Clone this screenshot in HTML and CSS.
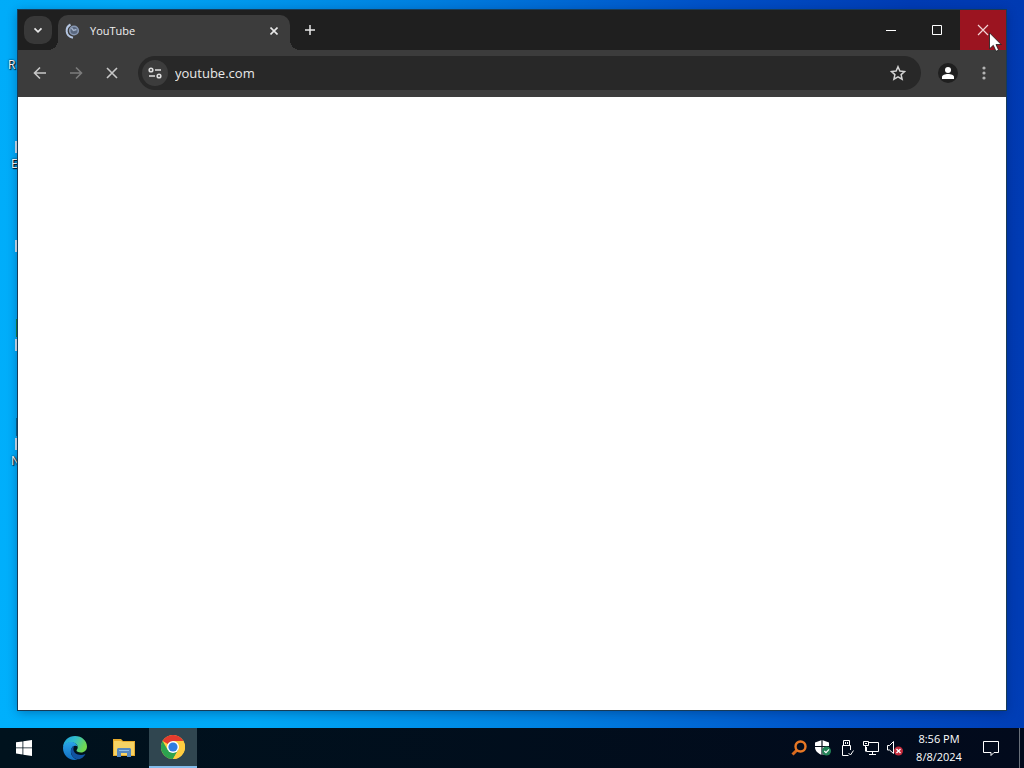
FILE: index.html
```html
<!DOCTYPE html>
<html lang="en">

<head>
  <meta charset="utf-8">
  <meta name="viewport" content="width=device-width">
  <title>YouTube</title>
  <link rel="stylesheet" href="styles.css">
</head>

<body>
  <main class="desktop">
    <!-- shortcuts, mostly hidden behind the window -->
    <ul class="shortcuts">
      <li><span class="label">R</span></li>
      <li><i class="arrow"></i><span class="label">E</span></li>
      <li><i class="arrow"></i></li>
      <li><i class="edge green"></i><i class="arrow"></i></li>
      <li><i class="edge"></i><i class="arrow"></i><span class="label">N</span></li>
    </ul>

    <section class="window">
      <header class="titlebar">
        <button class="tab-search" aria-label="Search tabs">
          <svg width="10" height="10" viewBox="0 0 10 10"><path d="M1.500 3.300L5 6.800l3.500-3.500" fill="none" stroke="#e8e8e8" stroke-width="1.700"/></svg>
        </button>
        <div class="tab">
          <svg width="16" height="16" viewBox="0 0 16 16" fill="none">
            <path d="M5.500 1.500C0 4.500 0 13 8 14.800" stroke="#b5c6e2" stroke-width="2"/>
            <circle cx="9" cy="7.500" r="4.300" fill="#59677e" stroke="#8797b2" stroke-width="1.600"/>
            <path d="M6.500 5l2 2.500 3-1" stroke="#a5b3ca" stroke-width="1.400"/>
          </svg>
          <span class="tab-title">YouTube</span>
          <button class="tab-close" aria-label="Close tab">
            <svg width="8" height="8" viewBox="0 0 8 8"><path d="M0.500 0.500l7 7M7.500 0.500l-7 7" stroke="#e8e8e8" stroke-width="1.600"/></svg>
          </button>
        </div>
        <button class="new-tab" aria-label="New tab">
          <svg width="10" height="10" viewBox="0 0 10 10"><path d="M5 0v10M0 5h10" stroke="#e8e8e8" stroke-width="1.500"/></svg>
        </button>
        <div class="controls">
          <button aria-label="Minimize"><svg width="10" height="10" viewBox="0 0 10 10"><path d="M0 5.500h10" stroke="#fff"/></svg></button>
          <button aria-label="Maximize"><svg width="10" height="10" viewBox="0 0 10 10"><path d="M.5.5h9v9h-9z" fill="none" stroke="#fff"/></svg></button>
          <button class="close" aria-label="Close"><svg width="12" height="12" viewBox="0 0 12 12"><path d="M1 1l10 10M11 1L1 11" stroke="#f3d3d5" stroke-width="1.200"/></svg></button>
        </div>
      </header>

      <nav class="toolbar">
        <button class="nav-button" aria-label="Back">
          <svg width="16" height="16" viewBox="0 0 16 16"><path d="M14 8H3M8 2.500L2.500 8 8 13.500" fill="none" stroke="#c8c8c8" stroke-width="1.600"/></svg>
        </button>
        <button class="nav-button" aria-label="Forward" disabled>
          <svg width="16" height="16" viewBox="0 0 16 16"><path d="M2 8h11M8 2.500L13.500 8 8 13.500" fill="none" stroke="#7c7c7c" stroke-width="1.600"/></svg>
        </button>
        <button class="nav-button" aria-label="Stop loading">
          <svg width="16" height="16" viewBox="0 0 16 16"><path d="M3 3l10 10M13 3L3 13" stroke="#c8c8c8" stroke-width="1.600"/></svg>
        </button>
        <div class="omnibox">
          <button class="site-info" aria-label="View site information">
            <svg width="14" height="12" viewBox="0 0 14 12" fill="none" stroke="#dedede" stroke-width="1.600">
              <circle cx="3" cy="3" r="1.800"/><path d="M7 3h6M1 9h6"/><circle cx="11" cy="9" r="1.800"/>
            </svg>
          </button>
          <input class="address" type="text" value="youtube.com" aria-label="Address">
          <button class="bookmark" aria-label="Bookmark this tab">
            <svg width="16" height="16" viewBox="0 0 16 16"><path d="M8 1.700l1.900 4.300 4.700.5-3.500 3.100 1 4.600L8 11.800l-4.100 2.400 1-4.600L1.400 6.500l4.700-.5z" fill="none" stroke="#d4d4d4" stroke-width="1.500"/></svg>
          </button>
        </div>
        <button class="profile" aria-label="You">
          <svg width="14" height="14" viewBox="0 0 14 14" fill="#fff"><circle cx="7" cy="4" r="3"/><path d="M1 13v-2c0-2 3-3 6-3s6 1 6 3v2z"/></svg>
        </button>
        <button class="nav-button" aria-label="Menu">
          <svg width="4" height="14" viewBox="0 0 4 14" fill="#b4b4b4"><circle cx="2" cy="2" r="1.600"/><circle cx="2" cy="7" r="1.600"/><circle cx="2" cy="12" r="1.600"/></svg>
        </button>
      </nav>

      <div class="page"></div>

      <svg class="cursor" width="13" height="20" viewBox="0 0 13 20"><path d="M.5.8v16l3.800-3.500 2.700 6 2.600-1.200-2.600-5.600h5.200z" fill="#fff" stroke="#1b1b1b" stroke-width=".8"/></svg>
    </section>
  </main>

  <footer class="taskbar">
    <button class="task" aria-label="Start">
      <svg width="16" height="16" viewBox="0 0 16 16" fill="#fff"><path d="M0 2.300l6.500-.9v6.100H0zM7.300 1.300L16 0v7.500H7.300zM0 8.300h6.500v6.200L0 13.600zM7.300 8.300H16V16l-8.700-1.300z"/></svg>
    </button>
    <button class="task" aria-label="Microsoft Edge">
      <svg width="24" height="24" viewBox="0 0 24 24">
        <defs>
          <linearGradient id="edge-top" x1="0" y1="0" x2="1" y2=".4"><stop offset="0" stop-color="#1b9de0"/><stop offset=".5" stop-color="#31bdca"/><stop offset="1" stop-color="#70d84f"/></linearGradient>
          <linearGradient id="edge-left" x1="0" y1="0" x2="0" y2="1"><stop offset="0" stop-color="#29a4e8"/><stop offset="1" stop-color="#126dc0"/></linearGradient>
        </defs>
        <path d="M0 11C.5 4.500 5.500 0 12 0c7 0 12 5 12 10.500 0 3.500-2.500 6-6 6-3 0-4.500-1.200-4.500-2 0-.8 1.200-1.200 1.200-3.200C14.700 8.500 12 6.500 8.500 6.500 4.500 6.500 1.500 8.500 0 11z" fill="url(#edge-top)"/>
        <path d="M0 12c0-3.500 4-6 8-6 3.500 0 6 2 6.500 4.500C13.500 9.500 9 9 8 14c-.8 4.500 2 8.500 6.500 9.600C7 25.500 0 20 0 12z" fill="url(#edge-left)"/>
        <path d="M11.500 9.500C8.500 11 7.500 13.500 8 16.500c.8 4 4 6.800 7.200 6.800 3 0 6-2.600 7.200-5.300-6 2.600-12.500-.5-12-5.500.1-1.200.6-2.200 1.100-3z" fill="#1152a0"/>
      </svg>
    </button>
    <button class="task" aria-label="File Explorer">
      <svg width="22" height="20" viewBox="0 0 22 20">
        <path d="M0 2V1h8l2 2h12v15H0z" fill="#e8ac2d"/>
        <path d="M1 3h7l2 1h11v13H1z" fill="#f6d365"/>
        <path d="M4 19v-8l1-1h12l1 1v8h-4v-4H8v4z" fill="#5688bf"/>
        <path d="M6 12h10v1H6z" fill="#8fbfe9"/>
      </svg>
    </button>
    <button class="task active" aria-label="Google Chrome">
      <svg width="24" height="24" viewBox="0 0 24 24">
        <circle cx="12" cy="12" r="12" fill="#ffcd40"/>
        <path d="M12 12L1.600 6A12 12 0 0 1 22.400 6H12z" fill="#e33b2e"/>
        <path d="M1.600 6A12 12 0 0 0 12 24l5.200-9L12 12 6.800 15z" fill="#2da34f"/>
        <path d="M22.400 6A12 12 0 0 1 12 24l5.200-9A6 6 0 0 0 12 6z" fill="#ffcd40"/>
        <circle cx="12" cy="12" r="6" fill="#fff"/>
        <circle cx="12" cy="12" r="4.600" fill="#2f7de1"/>
      </svg>
    </button>

    <div class="tray">
      <button aria-label="Search tool">
        <svg width="16" height="16" viewBox="0 0 16 16" fill="none"><path d="M6 10l-4.500 4.500" stroke="#d8691e" stroke-width="3"/><circle cx="9.500" cy="6.500" r="5" stroke="#e87825" stroke-width="2.400"/></svg>
      </button>
      <button aria-label="Windows Security">
        <svg width="16" height="16" viewBox="0 0 16 16"><path d="M7 0l7 2.500V7c0 4-3 6.500-7 8-4-1.500-7-4-7-8V2.500z" fill="#fff"/><path d="M7 0v15M0 6.500h14" stroke="#07101b" stroke-width="1.200"/><circle cx="11.500" cy="11" r="4.500" fill="#238357"/><path d="M9.300 11l1.700 1.700 3-3.300" fill="none" stroke="#fff" stroke-width="1.200"/></svg>
      </button>
      <button aria-label="Safely remove hardware">
        <svg width="14" height="16" viewBox="0 0 14 16" fill="none" stroke="#fff"><path d="M3.500 5.500v-5h6v5M10.500 10V5.500h-8v10h6"/><path d="M5.500 2v2M7.500 2v2M8.500 13l2 2 3-4.500"/></svg>
      </button>
      <button aria-label="Network">
        <svg width="16" height="16" viewBox="0 0 16 16" fill="none" stroke="#fff"><path d="M6 2.500h9.500v9h-12V7M9.500 11.500v3M6 14.500h7M.5 1.500h5v4h-5zM2.500 5.500v6M2 3.500h2"/></svg>
      </button>
      <button aria-label="Volume muted">
        <svg width="16" height="16" viewBox="0 0 16 16"><path d="M.5 5.500h2l4-4v12l-4-3.500h-2z" fill="none" stroke="#fff"/><circle cx="11.500" cy="11" r="4.500" fill="#c42b3c"/><path d="M9.500 9l4 4M13.500 9l-4 4" stroke="#fff" stroke-width="1.300"/></svg>
      </button>
    </div>
    <button class="clock"><time datetime="2024-08-08T20:56">8:56 PM<br>8/8/2024</time></button>
    <button class="notifications" aria-label="Notifications">
      <svg width="16" height="16" viewBox="0 0 16 16"><path d="M.5 1.500h15v11H11l-3 3v-3H.5z" fill="none" stroke="#fff"/></svg>
    </button>
    <button class="show-desktop" aria-label="Show desktop"></button>
  </footer>
</body>

</html>
```
FILE: styles.css
```css
* {
  box-sizing: border-box;
}

body {
  margin: 0;
  height: 100vh;
  display: flex;
  flex-direction: column;
  overflow: hidden;
  font-family: "Open Sans", "Noto Sans", sans-serif;
  font-size: 11px;
  color: #fff;
}

button {
  display: flex;
  align-items: center;
  justify-content: center;
  flex: none;
  padding: 0;
  border: none;
  background: none;
  color: inherit;
  font: inherit;
}

.desktop {
  position: relative;
  flex: 1;
  display: flex;
  padding: 10px 18px 18px;
  background: linear-gradient(80deg, #00b0fc 0%, #00a8f6 22%, #0080e0 48%, #0052c8 72%, #003cb4 90%, #003ab2 100%);
}

/* left column of desktop shortcuts */
.shortcuts {
  position: absolute;
  top: 40px;
  left: 8px;
  width: 10px;
  margin: 0;
  padding: 0;
  list-style: none;
}

.shortcuts li {
  position: relative;
  height: 99px;
}

.label {
  position: absolute;
  top: 16px;
  left: 3px;
  font-size: 12px;
  line-height: 18px;
  text-shadow: 1px 1px 1px #000, 0 0 2px #000;
}

.shortcuts li:first-child .label {
  left: 0;
}

.arrow {
  position: absolute;
  top: 2px;
  right: 0;
  width: 3px;
  height: 12px;
  background: #d5e4ee;
}

.edge {
  position: absolute;
  top: -18px;
  right: 0;
  width: 2px;
  height: 18px;
  background: #086894;
}

.edge.green {
  background: #168642;
}

.window {
  position: relative;
  flex: 1;
  display: flex;
  flex-direction: column;
  background: #fff;
  box-shadow: 0 0 0 1px #173b57, 0 2px 10px rgba(0, 20, 70, 0.4);
}

.titlebar {
  display: flex;
  height: 40px;
  padding-left: 6px;
  background: #1f1f1f;
}

.tab-search {
  width: 28px;
  height: 28px;
  margin: 6px 6px 0 0;
  border-radius: 10px;
  background: #383838;
}

.tab {
  position: relative;
  display: flex;
  align-items: center;
  width: 232px;
  height: 35px;
  margin-top: 5px;
  padding: 0 8px 4px 7px;
  border-radius: 10px 10px 0 0;
  background: #3c3c3c;
}

/* flared bottom corners */
.tab::before,
.tab::after {
  content: "";
  position: absolute;
  bottom: 0;
  width: 10px;
  height: 10px;
}

.tab::before {
  right: 100%;
  background: radial-gradient(circle at 0 0, transparent 10px, #3c3c3c 10px);
}

.tab::after {
  left: 100%;
  background: radial-gradient(circle at 100% 0, transparent 10px, #3c3c3c 10px);
}

.tab-title {
  flex: 1;
  margin-left: 9px;
  color: #f0f0f0;
}

.tab-close {
  width: 16px;
  height: 16px;
}

.new-tab {
  width: 28px;
  height: 28px;
  margin: 6px 0 0 6px;
}

.controls {
  display: flex;
  margin-left: auto;
}

.controls button {
  width: 46px;
}

.controls .close {
  background: #9b1420;
}

.toolbar {
  display: flex;
  align-items: center;
  gap: 8px;
  height: 47px;
  padding: 0 8px 2px;
  background: #3c3c3c;
}

.nav-button {
  width: 28px;
  height: 28px;
}

.omnibox {
  flex: 1;
  display: flex;
  align-items: center;
  height: 34px;
  margin: 0 5px 0 4px;
  padding: 0 9px 0 4px;
  border-radius: 17px;
  background: #282828;
}

.site-info {
  width: 26px;
  height: 26px;
  border-radius: 50%;
  background: #3c3c3c;
}

.address {
  flex: 1;
  min-width: 0;
  margin-left: 7px;
  padding: 0;
  border: none;
  outline: none;
  background: none;
  color: #e8e8e8;
  font: 13px "Open Sans", "Noto Sans", sans-serif;
}

.bookmark {
  width: 28px;
  height: 28px;
}

.profile {
  width: 20px;
  height: 20px;
  margin: 0 4px;
  border-radius: 50%;
  background: #1f1f1f;
}

.page {
  flex: 1;
  background: #fff;
}

.cursor {
  position: absolute;
  top: 22px;
  right: 4px;
}

.taskbar {
  display: flex;
  height: 40px;
  background: linear-gradient(90deg, #00121d, #020a1c);
}

.task {
  width: 48px;
  margin-right: 3px;
}

.task + .task {
  margin-right: 1px;
}

.task.active {
  background: #304650;
  border-bottom: 2px solid #83bceb;
}

.tray {
  display: flex;
  margin-left: auto;
}

.tray button {
  width: 24px;
}

.clock {
  width: 64px;
  line-height: 18px;
  text-align: center;
}

.notifications {
  width: 40px;
  margin-right: 8px;
}

.show-desktop {
  width: 5px;
  border-left: 1px solid #69707a;
}
```
